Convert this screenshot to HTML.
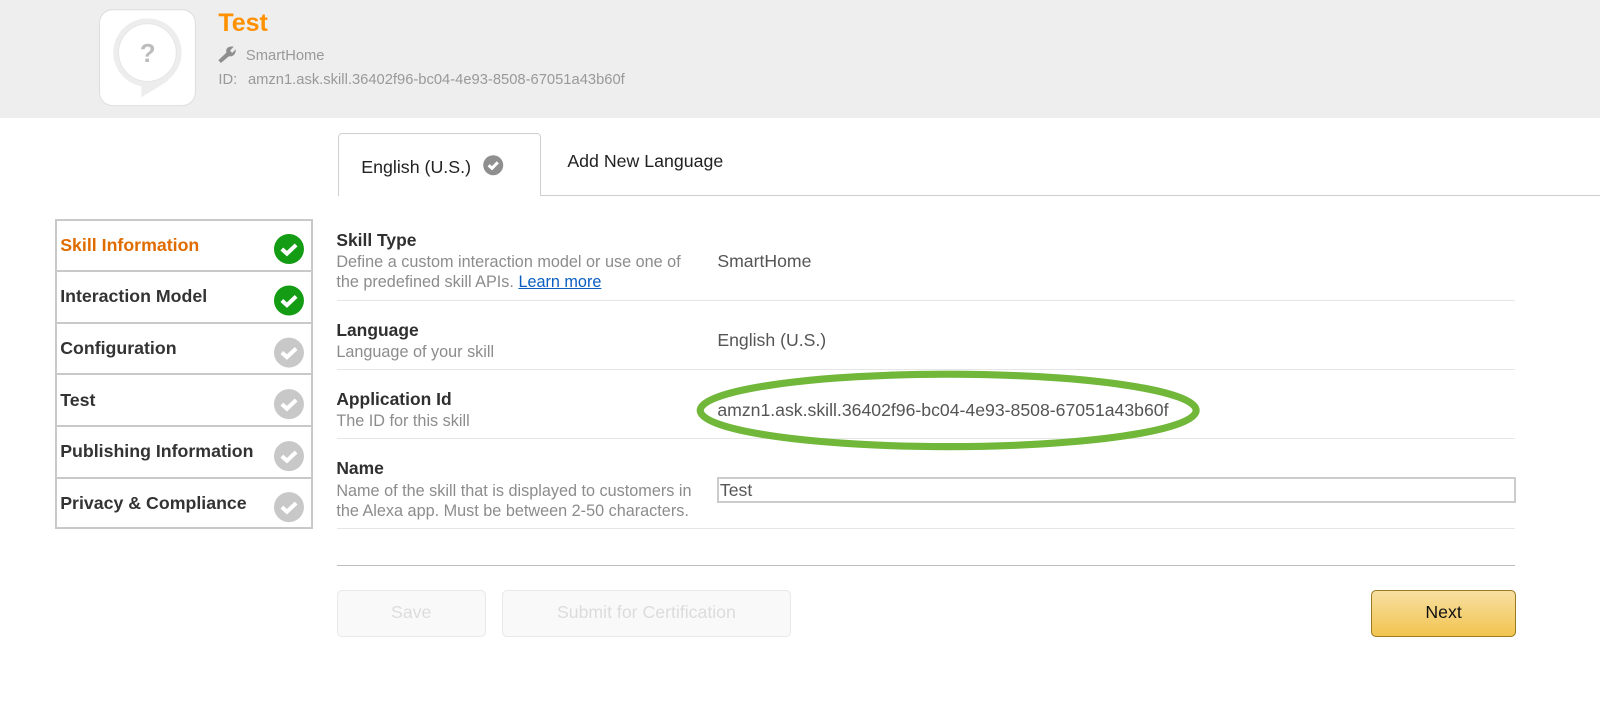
<!DOCTYPE html>
<html><head><meta charset="utf-8"><style>
html,body{margin:0;padding:0;background:#fff;width:1600px;height:714px;overflow:hidden}
body{position:relative;font-family:"Liberation Sans",Arial,sans-serif}
#w{position:absolute;left:0;top:0;width:1568px;height:700px;zoom:1.0204;filter:blur(.3px)}
.t{position:absolute;white-space:nowrap;line-height:20px}
.b{position:absolute}
.h{font-weight:bold;font-size:17.1px;color:#2f2f2f;margin-top:-.7px;margin-left:-.4px}
.d{font-size:15.9px;color:#8c8c8c;margin-left:-.4px}
.v{font-size:17.3px;color:#555}
.s{font-weight:bold;font-size:17.4px;color:#333}
.l{position:absolute;left:330px;width:1155px;height:1px;background:#e6e6e6}
.sl{position:absolute;left:54px;width:252px;height:2px;background:#c9c9c9}
.btn{position:absolute;box-sizing:border-box;top:578px;height:46px;border:1.5px solid #e8e8e8;border-radius:5px;background:#f9f9fa;color:#dcdcdc;font-size:17.35px;text-align:center;line-height:43px}
</style></head><body><div id="w">
<div class="b" style="left:0;top:0;width:1568px;height:115.3px;background:#eeeeee"></div>
<svg class="b" style="left:0;top:0" width="240" height="116" viewBox="0 0 240 116">
<rect x="97.5" y="9.5" width="94" height="94" rx="13" fill="#fff" stroke="#dedede"/>
<circle cx="144.5" cy="51.500" r="33.500" fill="#ededed"/>
<path d="M138.500 78L138.500 95.400L165 79L150 72Z" fill="#ededed"/>
<circle cx="144.500" cy="51.500" r="28.200" fill="#fff" stroke="#e2e2e2" stroke-width=".7"/>
<path d="M214 59L222 51.500C220.500 47.500 224 44.800 229 45.800L225.500 49.500L227.500 52L231 48.300C231.500 52.800 228 56.300 224.500 55L216.500 61.800Z" fill="#8e8e8e"/>
</svg>
<div class="t" style="left:134.800px;top:41px;width:20px;text-align:center;font-size:25.500px;font-weight:bold;color:#bdbdbd;line-height:22px">?</div>
<div class="t" style="left:214px;top:12px;font-size:24.500px;font-weight:bold;color:#ff9000;line-height:22px">Test</div>
<div class="t" style="left:241px;top:45.500px;font-size:14.450px;color:#999">SmartHome</div>
<div class="t" style="left:214px;top:68.700px;font-size:14.450px;color:#999">ID:</div>
<div class="t" style="left:243px;top:68.700px;font-size:14.450px;color:#999">amzn1.ask.skill.36402f96-bc04-4e93-8508-67051a43b60f</div>

<div class="b" style="left:530px;top:191px;width:1040px;height:1px;background:#cfcfcf"></div>
<div class="b" style="box-sizing:border-box;left:331px;top:130px;width:199px;height:62px;border:1px solid #cfcfcf;border-bottom:0;border-radius:4px 4px 0 0;background:#fff"></div>
<div class="t" style="left:354px;top:154px;font-size:17.450px;color:#222">English (U.S.)</div>
<svg class="b" style="left:472px;top:150.500px" width="22" height="22" viewBox="0 0 22 22"><circle cx="11" cy="11" r="9.800" fill="#8f8f8f"/><path d="M6.500 11L9.800 14L15.500 8.200" fill="none" stroke="#fff" stroke-width="3"/></svg>
<div class="t" style="left:556px;top:148px;font-size:17.400px;color:#222">Add New Language</div>

<div class="b" style="box-sizing:border-box;left:54px;top:214.500px;width:253px;height:304px;border:2px solid #c9c9c9"></div>
<div class="sl" style="top:264.700px"></div><div class="sl" style="top:315.300px"></div><div class="sl" style="top:365.900px"></div><div class="sl" style="top:416.500px"></div><div class="sl" style="top:467.100px"></div>
<div class="t s" style="left:59px;top:230px;color:#e06c00">Skill Information</div>
<div class="t s" style="left:59px;top:280.500px">Interaction Model</div>
<div class="t s" style="left:59px;top:331px">Configuration</div>
<div class="t s" style="left:59px;top:382px">Test</div>
<div class="t s" style="left:59px;top:432.500px">Publishing Information</div>
<div class="t s" style="left:59px;top:483px">Privacy &amp; Compliance</div>
<svg class="b" style="left:260px;top:220px" width="50" height="300" viewBox="0 0 50 300">
<g fill="none" stroke="#fff" stroke-width="4">
<circle cx="23.500" cy="24.500" r="14.700" fill="#149c14" stroke="none"/><path d="M16.500 24.500L21.500 29L30.500 20.500"/>
<circle cx="23.500" cy="75" r="14.700" fill="#149c14" stroke="none"/><path d="M16.500 75L21.500 79.500L30.500 71"/>
<circle cx="23.500" cy="126" r="14.700" fill="#c8c8c8" stroke="none"/><path d="M16.500 126L21.500 130.500L30.500 122"/>
<circle cx="23.500" cy="176.500" r="14.700" fill="#c8c8c8" stroke="none"/><path d="M16.500 176.500L21.500 181L30.500 172.500"/>
<circle cx="23.500" cy="227.500" r="14.700" fill="#c8c8c8" stroke="none"/><path d="M16.500 227.500L21.500 232L30.500 223.500"/>
<circle cx="23.500" cy="277.500" r="14.700" fill="#c8c8c8" stroke="none"/><path d="M16.500 277.500L21.500 282L30.500 273.500"/>
</g></svg>

<div class="t h" style="left:330px;top:226px">Skill Type</div>
<div class="t d" style="left:330px;top:247px">Define a custom interaction model or use one of</div>
<div class="t d" style="left:330px;top:267px">the predefined skill APIs. <span style="color:#0a5fc0;text-decoration:underline">Learn more</span></div>
<div class="t v" style="left:703px;top:246px">SmartHome</div>
<div class="l" style="top:293.600px"></div>
<div class="t h" style="left:330px;top:314px">Language</div>
<div class="t d" style="left:330px;top:335px">Language of your skill</div>
<div class="t v" style="left:703px;top:323.500px">English (U.S.)</div>
<div class="l" style="top:361.600px"></div>
<div class="t h" style="left:330px;top:382px">Application Id</div>
<div class="t d" style="left:330px;top:403px">The ID for this skill</div>
<div class="t v" style="left:703px;top:392px">amzn1.ask.skill.36402f96-bc04-4e93-8508-67051a43b60f</div>
<div class="l" style="top:429.600px"></div>
<div class="t h" style="left:330px;top:450px">Name</div>
<div class="t d" style="left:330px;top:471px">Name of the skill that is displayed to customers in</div>
<div class="t d" style="left:330px;top:491px">the Alexa app. Must be between 2-50 characters.</div>
<div class="b" style="box-sizing:border-box;left:703px;top:467px;width:782.500px;height:26px;border:2px solid #cccccc;background:#fff"></div>
<div class="t v" style="left:705.500px;top:470px">Test</div>
<div class="l" style="top:517.600px"></div>
<svg class="b" style="left:675px;top:358px" width="510" height="90" viewBox="0 0 510 90"><ellipse cx="254" cy="44.500" rx="243" ry="35.500" fill="none" stroke="#70b73a" stroke-width="7"/></svg>

<div class="b" style="left:330px;top:553.500px;width:1155px;height:1.500px;background:#bdbdbd"></div>
<div class="btn" style="left:330px;width:146px">Save</div>
<div class="btn" style="left:492px;width:283px">Submit for Certification</div>
<div class="btn" style="left:1344px;width:141.500px;border:1.500px solid #9a7a1e;background:linear-gradient(#f7dfa2,#f2c44f);color:#111;border-radius:5px">Next</div>
</div></body></html>
